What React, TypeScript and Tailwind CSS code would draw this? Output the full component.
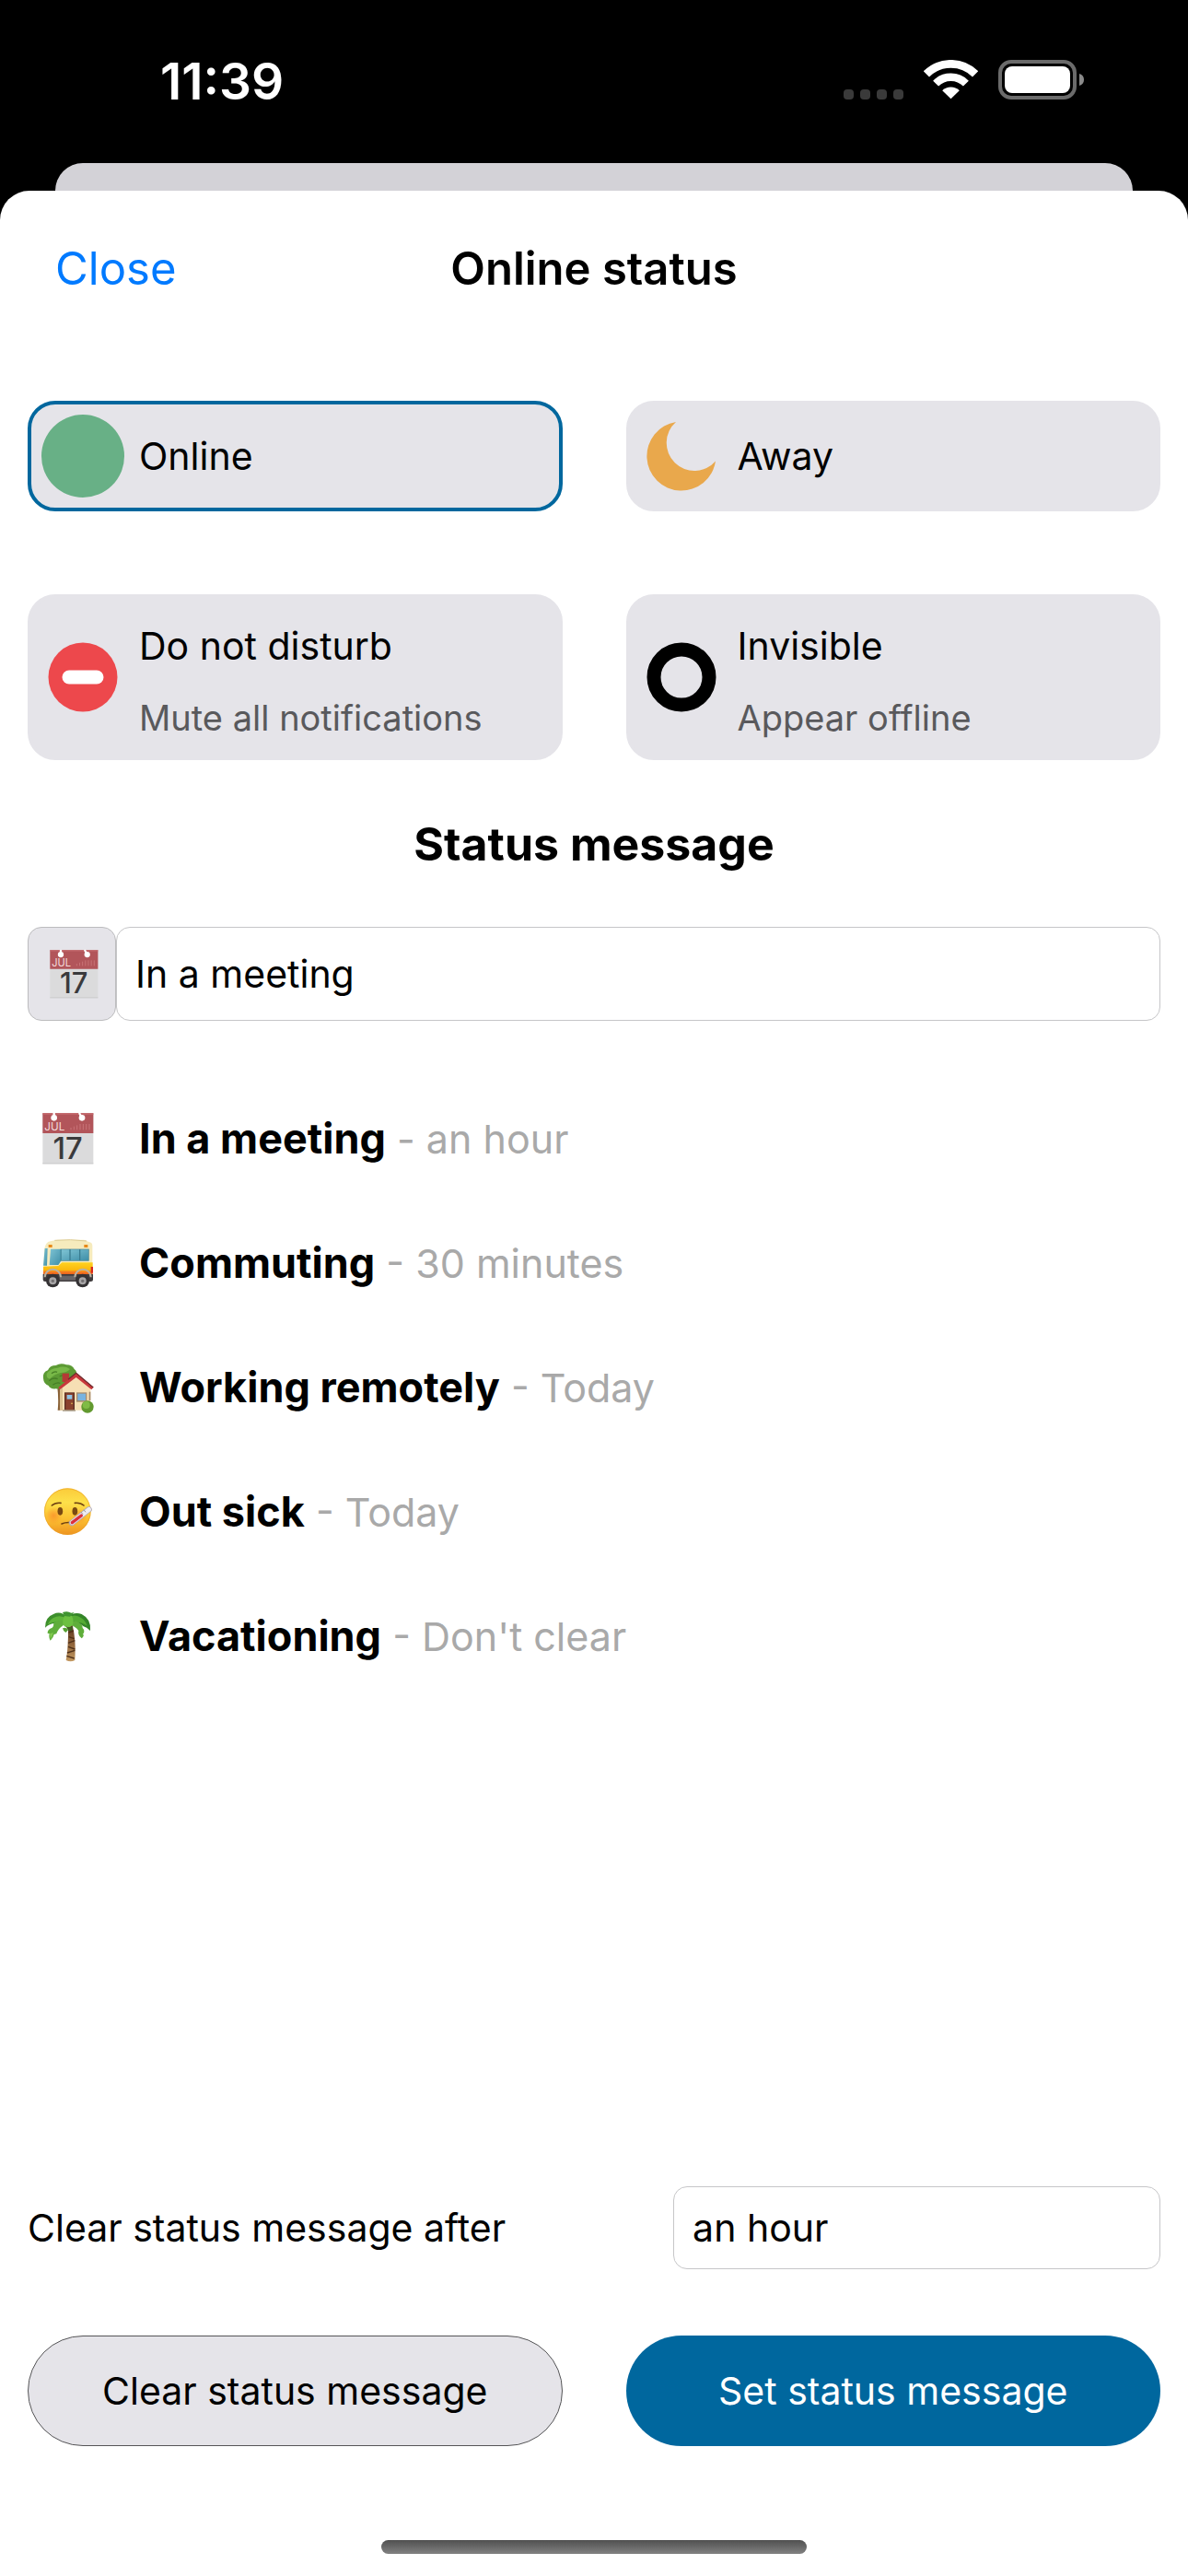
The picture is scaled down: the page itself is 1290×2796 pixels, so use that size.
import { useState, type ReactNode } from 'react';

type IconProps = { className?: string };

function CellularDots() {
  return (
    <svg viewBox="0 0 65 11" className="w-[65px] h-[11px]" fill="#3a3a3a" aria-hidden="true">
      <rect x="0" width="11" height="11" rx="4" />
      <rect x="18" width="11" height="11" rx="4" />
      <rect x="36" width="11" height="11" rx="4" />
      <rect x="54" width="11" height="11" rx="4" />
    </svg>
  );
}

function WifiIcon() {
  return (
    <svg viewBox="0 0 59 43" className="w-[59px] h-[43px]" fill="none" stroke="#fff" aria-hidden="true">
      <path d="M2.9 15.4A37.6 37.6 0 0 1 56.1 15.4" strokeWidth="8.8" />
      <path d="M13.1 25.6A23.2 23.2 0 0 1 45.9 25.6" strokeWidth="8.4" />
      <path d="M29.5 42.2L20.2 33.2A13.4 13.4 0 0 1 38.8 33.2Z" fill="#fff" stroke="none" />
    </svg>
  );
}

function BatteryIcon() {
  return (
    <svg viewBox="0 0 93 43" className="w-[93px] h-[43px]" aria-hidden="true">
      <rect x="2" y="2" width="81" height="39" rx="12" fill="none" stroke="#6b6b6b" strokeWidth="4" />
      <rect x="7" y="7" width="71" height="29" rx="8" fill="#fff" />
      <path d="M88 15C91.500 16 93 18.500 93 21.500S91.500 27 88 28Z" fill="#8a8a8a" />
    </svg>
  );
}

function OnlineIcon() {
  return (
    <svg viewBox="0 0 90 90" className="w-[90px] h-[90px]" aria-hidden="true">
      <circle cx="45" cy="45" r="45" fill="#68b086" />
    </svg>
  );
}

function AwayIcon() {
  return (
    <svg viewBox="0 0 90 90" className="w-[90px] h-[90px]" aria-hidden="true">
      <path d="M39 8A37.500 37.500 0 1 0 82 50.500A30.300 30.300 0 1 1 39 8Z" fill="#e9a84c" />
    </svg>
  );
}

function DndIcon() {
  return (
    <svg viewBox="0 0 90 90" className="w-[90px] h-[90px]" aria-hidden="true">
      <circle cx="45" cy="45" r="37.5" fill="#ed484c" />
      <rect x="22.5" y="37.500" width="45" height="15" rx="7.500" fill="#fff" />
    </svg>
  );
}

function InvisibleIcon() {
  return (
    <svg viewBox="0 0 90 90" className="w-[90px] h-[90px]" aria-hidden="true">
      <circle cx="45" cy="45" r="30" fill="none" stroke="#000" strokeWidth="15" />
    </svg>
  );
}

function CalendarEmoji({ className }: IconProps) {
  return (
    <svg viewBox="0 0 168 168" overflow="visible" className={className} aria-hidden="true">
      <rect x="1" y="1" width="165" height="165" fill="#dbdbdc" />
      <rect x="1" y="162" width="165" height="4" fill="#cfcfd0" />
      <path d="M1 1H166V66H1Z" fill="#b2555a" />
      <path d="M1 1H166V5H1Z" fill="#c4696c" />
      <path d="M38 0V14M120 0L128 14" stroke="#fff" strokeWidth="7" />
      <circle cx="38" cy="16" r="10" fill="#fff" />
      <circle cx="129" cy="16" r="10" fill="#fff" />
      <path d="M93 55V48M103 55V44M113 55V40M123 55V36M133 55V36M143 55V36M153 55V36" stroke="#c97478" strokeWidth="3" />
      <text x="7" y="56" fontSize="35" fill="#f3dcdc" className="font-['Inter',sans-serif]">JUL</text>
      <text x="83" y="150" fontSize="98" fontWeight="500" textAnchor="middle" fill="#3a3a3c" className="font-['Inter',sans-serif]">17</text>
    </svg>
  );
}

function BusEmoji({ className }: IconProps) {
  return (
    <svg viewBox="0 0 168 168" className={className} aria-hidden="true">
      <defs>
        <linearGradient id="bus-glass" x1="0" y1="0" x2="1" y2="1">
          <stop offset="0" stopColor="#7fc4d4" />
          <stop offset="1" stopColor="#3f8fa8" />
        </linearGradient>
        <linearGradient id="bus-paint" x1="0" y1="0" x2="0" y2="1">
          <stop offset="0" stopColor="#ffd21f" />
          <stop offset="0.58" stopColor="#fbb80d" />
          <stop offset="0.7" stopColor="#f58220" />
          <stop offset="1" stopColor="#e8501c" />
        </linearGradient>
      </defs>
      <path d="M40 10Q44 8 50 8H134Q140 8 144 12L154 16Q163 18 163 28V96H4L6 44Q8 20 20 14Z" fill="#f6ebbd" />
      <path d="M40 10Q90 5 144 12" fill="none" stroke="#dccb92" strokeWidth="3" />
      <path d="M8 36H17L15 92H3Z" fill="url(#bus-glass)" />
      <path d="M27 38H60V78L52 90H23Z" fill="url(#bus-glass)" />
      <path d="M59 38H152V77H59Z" fill="#397c90" />
      <path d="M62 40H88V75H62ZM92 40H120V75H92ZM124 40H150V75H124Z" fill="url(#bus-glass)" />
      <rect x="20" y="24" width="12" height="9" fill="#e88a1a" />
      <rect x="136" y="24" width="12" height="9" fill="#e88a1a" />
      <path d="M3 95L52 93L64 82H164V124H3Z" fill="url(#bus-paint)" />
      <rect x="158" y="96" width="7" height="20" fill="#d8281c" />
      <path d="M2 120H165V138Q165 144 158 144H9Q2 144 2 138Z" fill="#3f3b3d" />
      <path d="M56 125H108V140H56Z" fill="#686467" />
      <path d="M8 130A25 25 0 0 1 60 130M106 130A25 25 0 0 1 158 130" fill="none" stroke="#b9b1a2" strokeWidth="6" />
      <circle cx="34" cy="141" r="22" fill="#343234" />
      <circle cx="131" cy="141" r="22" fill="#343234" />
      <circle cx="34" cy="142" r="12" fill="#a7a5a6" />
      <circle cx="131" cy="142" r="12" fill="#a7a5a6" />
      <circle cx="34" cy="142" r="5" fill="#716e70" />
      <circle cx="131" cy="142" r="5" fill="#716e70" />
    </svg>
  );
}

function HouseEmoji({ className }: IconProps) {
  return (
    <svg viewBox="0 0 168 168" className={className} aria-hidden="true">
      <path d="M48 76H62V158H50Q54 120 48 76Z" fill="#8a6238" />
      <path d="M3 54Q0 34 18 28Q24 12 44 12Q60 2 78 10Q98 10 104 24Q116 32 108 46Q92 54 76 70Q66 90 44 88Q26 90 20 78Q4 72 3 54Z" fill="#5c9a34" />
      <path d="M14 40Q26 20 50 20Q72 12 90 24Q80 36 60 36Q40 40 24 56Q12 54 14 40Z" fill="#78b848" />
      <path d="M22 62Q34 50 50 56M34 76Q46 66 58 70M56 48Q66 42 74 46M30 38Q40 30 48 34" fill="none" stroke="#467e26" strokeWidth="4" />
      <path d="M57 84L110 44L157 82V158H57Z" fill="#f6dfb4" />
      <path d="M57 84H66V158H57Z" fill="#dcc192" />
      <rect x="65" y="38" width="22" height="28" fill="#b43a35" />
      <path d="M52 84L110 37L166 84L160 91L110 51L58 90Z" fill="#c8383c" />
      <path d="M84 58L110 37L166 84" fill="none" stroke="#6f2a2c" strokeWidth="4" />
      <rect x="72" y="100" width="33" height="57" fill="#5b2f24" />
      <rect x="76" y="103" width="25" height="54" fill="#8a412d" />
      <rect x="80" y="108" width="17" height="14" fill="#8fc3e4" />
      <circle cx="96" cy="136" r="2.5" fill="#e6c35a" />
      <rect x="111" y="100" width="34" height="31" fill="#a68c70" />
      <rect x="115" y="104" width="26" height="22" fill="#78b3e0" />
      <path d="M152 98H157V126H152Z" fill="#a68c70" />
      <path d="M66 157H108V161H66Z" fill="#9a8b74" />
      <circle cx="147" cy="147" r="20" fill="#62992f" />
      <circle cx="143" cy="141" r="12" fill="#80bb45" />
    </svg>
  );
}

function SickEmoji({ className }: IconProps) {
  return (
    <svg viewBox="0 0 168 168" className={className} aria-hidden="true">
      <defs>
        <linearGradient id="sick-face" x1="0" y1="0" x2="0" y2="1">
          <stop offset="0" stopColor="#fbcb3a" />
          <stop offset="0.3" stopColor="#fde04a" />
          <stop offset="0.65" stopColor="#fcc232" />
          <stop offset="1" stopColor="#ee9320" />
        </linearGradient>
        <radialGradient id="sick-cheek">
          <stop offset="0" stopColor="#f98328" stopOpacity="0.65" />
          <stop offset="1" stopColor="#f98328" stopOpacity="0" />
        </radialGradient>
      </defs>
      <circle cx="82" cy="83" r="76" fill="url(#sick-face)" />
      <circle cx="82" cy="83" r="74.5" fill="none" stroke="#e9a02a" strokeWidth="3" opacity="0.6" />
      <circle cx="37" cy="96" r="28" fill="url(#sick-cheek)" />
      <circle cx="122" cy="98" r="24" fill="url(#sick-cheek)" />
      <path d="M31 63Q42 53 60 55M106 55Q124 53 135 63" fill="none" stroke="#6f4212" strokeWidth="5" strokeLinecap="round" />
      <ellipse cx="58" cy="82" rx="8.500" ry="13" fill="#7a4a12" />
      <ellipse cx="106" cy="82" rx="8.500" ry="13" fill="#7a4a12" />
      <path d="M63 123Q78 116 100 120" fill="none" stroke="#6f4212" strokeWidth="5" strokeLinecap="round" />
      <path d="M96 120L152 76" stroke="#b3aeb8" strokeWidth="19" strokeLinecap="round" />
      <path d="M97 119L152 76" stroke="#efedf2" strokeWidth="14" strokeLinecap="round" />
      <path d="M97 119L127 96" stroke="#dc2f3c" strokeWidth="10" strokeLinecap="round" />
      <path d="M126 84L132 92M135 77L141 85" stroke="#9a96a0" strokeWidth="3" />
    </svg>
  );
}

function PalmEmoji({ className }: IconProps) {
  return (
    <svg viewBox="0 0 168 168" className={className} aria-hidden="true">
      <defs>
        <linearGradient id="palm-trunk" x1="0" y1="0" x2="0" y2="1">
          <stop offset="0" stopColor="#5a3620" />
          <stop offset="0.5" stopColor="#8e6239" />
          <stop offset="1" stopColor="#c49a62" />
        </linearGradient>
      </defs>
      <path d="M84 48H98Q106 80 107 120Q107 145 106 162Q92 170 77 162Q85 120 84 48Z" fill="url(#palm-trunk)" />
      <path d="M85 72L102 66M86 86L104 92M84 106L106 98M84 118L106 126M81 138L106 130M79 148L104 156" stroke="#4f3019" strokeWidth="4" />
      <path d="M66 58Q80 52 84 64Q78 70 76 72Q68 68 66 58Z" fill="#55a132" />
      <path d="M82 22Q60 0 36 12Q8 22 9 56Q22 44 38 42Q50 36 62 40Q76 34 82 22Z" fill="#3d8f2c" />
      <path d="M80 26Q56 12 36 24Q22 32 18 46Q32 36 50 38Q68 36 80 26Z" fill="#5fb53a" />
      <path d="M78 36Q50 26 36 44Q38 50 32 56Q16 62 17 74L23 76Q20 88 26 98Q36 88 38 78L46 76Q52 58 66 50Z" fill="#5fae3a" />
      <path d="M24 76L36 72L27 94Z" fill="#82ca50" />
      <path d="M82 22Q104 2 128 12Q160 28 156 66Q144 54 134 52Q122 40 104 38Q90 32 82 22Z" fill="#348527" />
      <path d="M86 22Q108 10 126 24Q140 32 146 50Q128 38 112 38Q96 34 86 22Z" fill="#55ab34" />
      <path d="M92 36Q116 30 130 50Q130 58 135 62Q138 72 132 76Q138 84 128 91Q114 80 118 66Q108 52 92 48Z" fill="#5fae3a" />
      <path d="M72 18Q84 10 96 18Q104 34 98 48Q88 60 72 52Q60 40 72 18Z" fill="#6cc040" />
      <path d="M66 6Q82 0 94 8L104 6L90 20L72 18Z" fill="#3f9430" />
      <path d="M76 50Q84 58 100 52L96 66H85Z" fill="#3f5e20" />
    </svg>
  );
}

const statuses: { id: string; label: string; hint?: string; icon: ReactNode }[] = [
  { id: 'online', label: 'Online', icon: <OnlineIcon /> },
  { id: 'away', label: 'Away', icon: <AwayIcon /> },
  { id: 'dnd', label: 'Do not disturb', hint: 'Mute all notifications', icon: <DndIcon /> },
  { id: 'invisible', label: 'Invisible', hint: 'Appear offline', icon: <InvisibleIcon /> },
];

const presets = [
  { message: 'In a meeting', clearAt: 'an hour', Icon: CalendarEmoji },
  { message: 'Commuting', clearAt: '30 minutes', Icon: BusEmoji },
  { message: 'Working remotely', clearAt: 'Today', Icon: HouseEmoji },
  { message: 'Out sick', clearAt: 'Today', Icon: SickEmoji },
  { message: 'Vacationing', clearAt: "Don't clear", Icon: PalmEmoji },
];

const clearOptions = ["Don't clear", '30 minutes', 'an hour', '4 hours', 'Today', 'This week'];

export default function App() {
  const [status, setStatus] = useState('online');
  const [message, setMessage] = useState('In a meeting');
  const [clearAfter, setClearAfter] = useState('an hour');
  const selected = presets.find((p) => p.message === message) ?? presets[0];

  return (
    <div className="min-h-screen flex flex-col bg-black text-black font-['Inter',sans-serif] text-[41px] leading-none">
      <div className="h-[177px] flex items-center justify-between pl-[174px] pr-[113px] text-white">
        <span className="text-[55px] font-semibold">11:39</span>
        <div className="mb-1 flex items-end">
          <CellularDots />
          <div className="ml-[22px] flex gap-[22px]">
            <WifiIcon />
            <BatteryIcon />
          </div>
        </div>
      </div>

      <div className="h-[30px] mx-[60px] rounded-t-[30px] bg-[#d3d2d7]" />

      <main className="flex-1 flex flex-col rounded-t-[32px] bg-white px-[30px]">
        <header className="h-[168px] grid grid-cols-[1fr_auto_1fr] items-center px-[30px] text-[49px]">
          <button type="button" className="justify-self-start text-[#007aff]">Close</button>
          <h1 className="font-semibold">Online status</h1>
        </header>

        <div className="mt-[60px] grid grid-cols-2 gap-x-[69px] gap-y-[90px]">
          {statuses.map((s) => (
            <button
              key={s.id}
              type="button"
              aria-pressed={status === s.id}
              onClick={() => setStatus(s.id)}
              className={`flex items-center gap-4 rounded-[30px] border-4 bg-[#e5e4e9] pl-[11px] text-left ${s.hint ? 'h-[180px]' : 'h-[120px]'} ${status === s.id ? 'border-[#00679e]' : 'border-[#e5e4e9]'}`}
            >
              {s.icon}
              {s.hint ? (
                <span className="flex flex-col gap-[38px] pt-2">
                  <span>{s.label}</span>
                  <span className="text-[38px] text-[#59595c]">{s.hint}</span>
                </span>
              ) : (
                <span>{s.label}</span>
              )}
            </button>
          ))}
        </div>

        <h2 className="h-[181px] flex items-center justify-center text-[50px] font-bold">Status message</h2>

        <div className="flex h-[102px]">
          <button
            type="button"
            aria-label="Choose emoji"
            className="w-24 flex items-center justify-center rounded-[15px] border border-[#bcbcbe] bg-[#e5e4e9] pl-1"
          >
            <selected.Icon className="w-[53px] h-[53px]" />
          </button>
          <input
            type="text"
            aria-label="Status message"
            value={message}
            onChange={(e) => setMessage(e.target.value)}
            className="flex-1 min-w-0 rounded-[15px] border border-[#c6c6c8] px-5"
          />
        </div>

        <ul className="mt-[60px] text-[45px]">
          {presets.map(({ message: text, clearAt, Icon }) => (
            <li key={text}>
              <button
                type="button"
                onClick={() => { setMessage(text); setClearAfter(clearAt); }}
                className="w-full h-[135px] flex items-center pl-4 text-left"
              >
                <Icon className="w-14 h-14 mr-[49px]" />
                <span className="whitespace-pre">
                  <span className="font-bold">{text}</span>
                  <span className="text-[43px] text-[#a9a9a9]"> - {clearAt}</span>
                </span>
              </button>
            </li>
          ))}
        </ul>

        <div className="mt-auto flex items-center justify-between">
          <label htmlFor="clear-after">Clear status message after</label>
          <select
            id="clear-after"
            value={clearAfter}
            onChange={(e) => setClearAfter(e.target.value)}
            className="w-[43%] h-[90px] appearance-none rounded-[15px] border border-[#c6c6c8] bg-white px-5"
          >
            {clearOptions.map((o) => <option key={o}>{o}</option>)}
          </select>
        </div>

        <div className="mt-[72px] grid grid-cols-2 gap-x-[69px]">
          <button type="button" onClick={() => setMessage('')} className="h-[120px] rounded-full border border-[#555557] bg-[#e5e4e9]">
            Clear status message
          </button>
          <button type="button" className="h-[120px] rounded-full bg-[#00679e] text-white">
            Set status message
          </button>
        </div>

        <div className="mt-[102px] mb-6 h-[15px] w-[462px] self-center rounded-full bg-linear-to-b from-[#505050] to-[#828282]" />
      </main>
    </div>
  );
}
